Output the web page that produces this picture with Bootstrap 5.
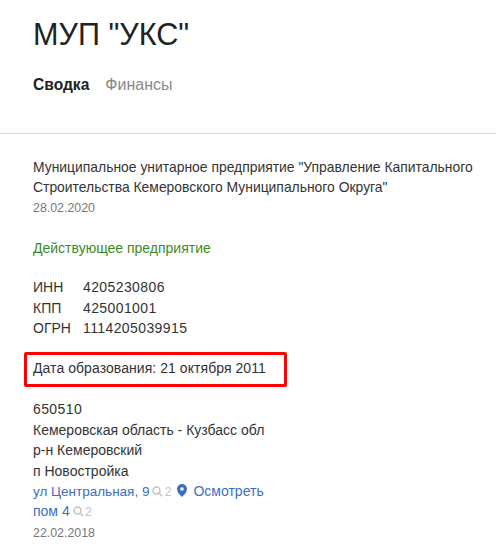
<!DOCTYPE html>
<html lang="ru">
<head>
<meta charset="utf-8">
<title>МУП "УКС"</title>
<link rel="stylesheet" href="https://cdn.jsdelivr.net/npm/bootstrap@5.3.0/dist/css/bootstrap.min.css">
<style>
html,body{height:554px;overflow:hidden}
body{font-family:"Liberation Sans",sans-serif;font-size:14px;line-height:20.4px;color:#333;background:#fff}
.head-zone{padding:14px 15px 0 33px;height:134px;border-bottom:1px solid #ddd}
.org-title{font-size:30.6px;line-height:40px;font-weight:400;color:#222;margin:0}
.tab-row{margin-top:21px;gap:16px;font-size:15.6px;line-height:20px}
.tab-on{font-weight:700;color:#222}
.tab-off{color:#888;font-size:16px}
.body-zone{padding:23px 15px 0 33px}
.org-full{font-size:13.9px}
.muted-date{font-size:12.4px;color:#777;line-height:20px}
.status-ok{color:#3d8a1f;margin-top:20px}
.codes{margin-top:19px;display:grid;grid-template-columns:50px auto;justify-content:start}
.num{letter-spacing:.4px}
.red-frame{margin:14px 0 0 -9px;width:263px;height:35px;border:3px solid #f00;border-radius:2px;padding:3px 0 0 6px;letter-spacing:.06px}
.addr{margin-top:12px}
.addr a{color:#3a6fc4;text-decoration:none}
.addr .muted-date{margin-top:1px}
.link-row{height:20.4px;white-space:nowrap}
.street{font-size:13.5px}
.hits{color:#c4c4c4;font-size:12px;margin-left:3px}
.hits svg{vertical-align:-1px}
.hit-num{margin-left:-2px}
.pin{margin:0 6px 0 6px;vertical-align:-1px}
</style>
</head>
<body>
<div class="head-zone">
  <h1 class="org-title">МУП "УКС"</h1>
  <div class="d-flex tab-row"><span class="tab-on">Сводка</span><span class="tab-off">Финансы</span></div>
</div>
<div class="body-zone">
  <div class="org-full">Муниципальное унитарное предприятие "Управление Капитального Строительства Кемеровского Муниципального Округа"</div>
  <div class="muted-date">28.02.2020</div>
  <div class="status-ok">Действующее предприятие</div>
  <div class="codes">
    <span>ИНН</span><span class="num">4205230806</span>
    <span>КПП</span><span class="num">425001001</span>
    <span>ОГРН</span><span class="num">1114205039915</span>
  </div>
  <div class="red-frame">Дата образования: 21 октября 2011</div>
  <div class="addr">
    <div class="num">650510</div>
    <div>Кемеровская область - Кузбасс обл</div>
    <div>р-н Кемеровский</div>
    <div>п Новостройка</div>
    <div class="link-row"><a class="street" href="#">ул Центральная, 9</a><span class="hits"><svg width="11" height="11" viewBox="0 0 11 11" fill="none" stroke="#c4c4c4" stroke-width="1.5"><circle cx="4.5" cy="4.5" r="3.5"/><path d="M7 7l3.2 3.2"/></svg> <span class="hit-num">2</span></span><svg class="pin" width="10" height="13" viewBox="0 0 10 13"><path fill="#3a6fc4" fill-rule="evenodd" d="M5 0a5 5 0 0 1 5 5c0 3-3 6-5 8C3 11 0 8 0 5a5 5 0 0 1 5-5zm0 3.200a1.800 1.800 0 1 0 0 3.600 1.800 1.800 0 0 0 0-3.600z"/></svg><a href="#">Осмотреть</a></div>
    <div class="link-row"><a href="#">пом 4</a><span class="hits"><svg width="11" height="11" viewBox="0 0 11 11" fill="none" stroke="#c4c4c4" stroke-width="1.5"><circle cx="4.500" cy="4.500" r="3.500"/><path d="M7 7l3.200 3.200"/></svg> <span class="hit-num">2</span></span></div>
    <div class="muted-date">22.02.2018</div>
  </div>
</div>
<script src="https://cdn.jsdelivr.net/npm/bootstrap@5.3.0/dist/js/bootstrap.bundle.min.js"></script>
</body>
</html>
